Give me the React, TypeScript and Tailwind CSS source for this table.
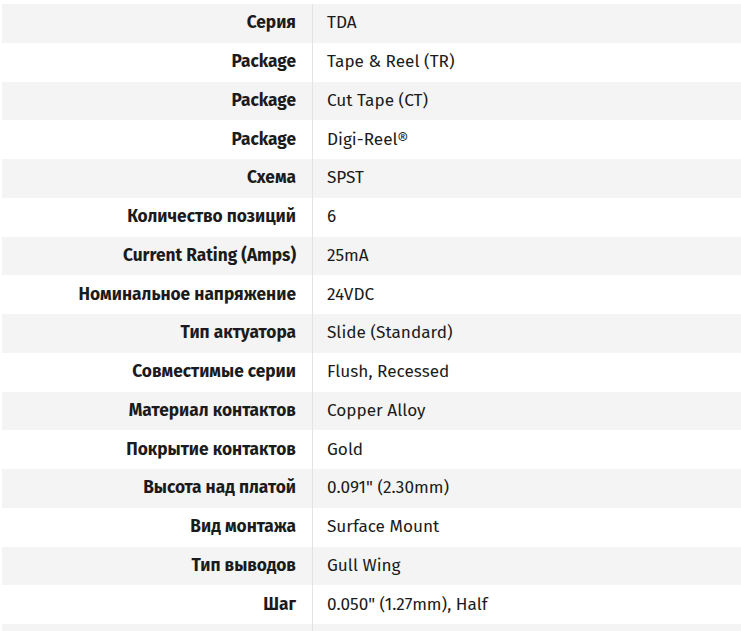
import React from "react";

const rows: [string, string][] = [
  ["Серия", "TDA"],
  ["Package", "Tape & Reel (TR)"],
  ["Package", "Cut Tape (CT)"],
  ["Package", "Digi-Reel®"],
  ["Схема", "SPST"],
  ["Количество позиций", "6"],
  ["Current Rating (Amps)", "25mA"],
  ["Номинальное напряжение", "24VDC"],
  ["Тип актуатора", "Slide (Standard)"],
  ["Совместимые серии", "Flush, Recessed"],
  ["Материал контактов", "Copper Alloy"],
  ["Покрытие контактов", "Gold"],
  ["Высота над платой", "0.091\" (2.30mm)"],
  ["Вид монтажа", "Surface Mount"],
  ["Тип выводов", "Gull Wing"],
  ["Шаг", "0.050\" (1.27mm), Half"],
  ["", ""],
];

export default function App() {
  return (
    <div className="h-[631px] overflow-hidden bg-white pl-[2px] pt-[4px] font-['Fira_Sans','Roboto',sans-serif] text-[#1b1b1b]">
      {rows.map(([label, value], i) => (
        <div
          key={i}
          className={`flex h-[38.75px] items-center ${i % 2 === 0 ? "bg-[#f4f4f4]" : "bg-white"}`}
        >
          <div className="flex h-full w-[311px] shrink-0 items-center justify-end border-r border-[#e3e3e3] pr-[16px] text-[17.3px] font-bold">
            {label}
          </div>
          <div className="pl-[14px] text-[17.2px]">{value}</div>
        </div>
      ))}
    </div>
  );
}
